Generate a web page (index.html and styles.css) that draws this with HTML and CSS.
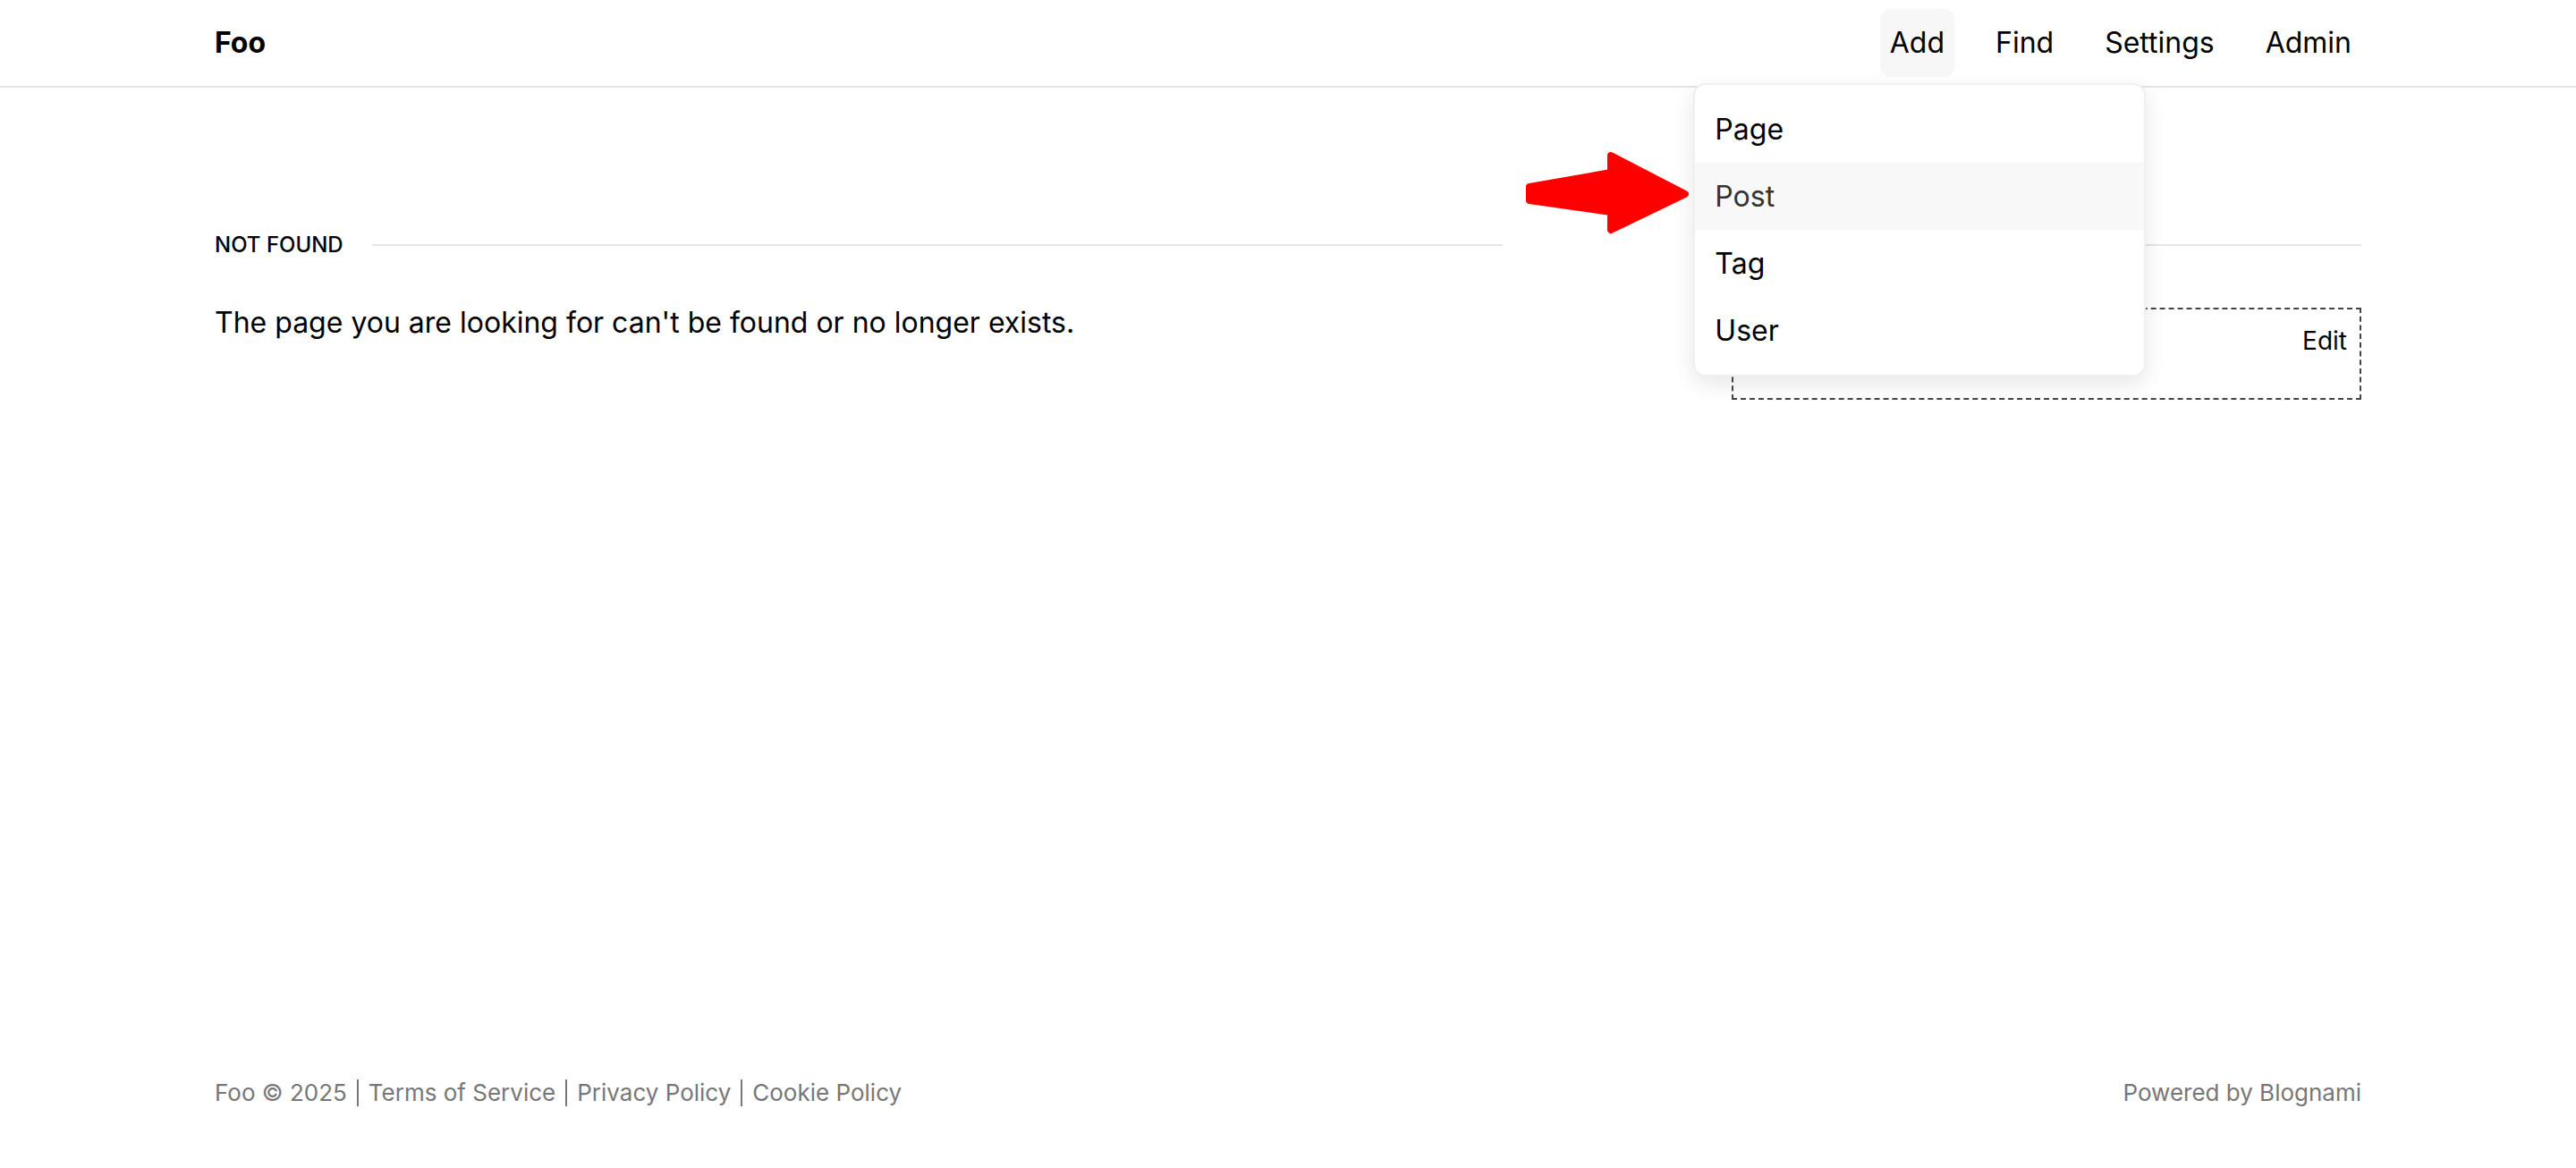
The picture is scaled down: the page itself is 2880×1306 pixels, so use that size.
FILE: index.html
```html
<!DOCTYPE html>
<html lang="en">
<head>
    <meta charset="UTF-8">
    <meta name="viewport" content="width=device-width, initial-scale=1.0">
    <title>Not Found - Foo</title>
    <link rel="stylesheet" href="styles.css">
</head>
<body>
    <header class="header">
        <div class="header-content">
            <a class="logo" href="#">Foo</a>
            <nav class="nav">
                <div class="nav-item open">
                    <a class="nav-link" href="#">Add</a>
                    <!-- Menu aberto -->
                    <div class="dropdown">
                        <svg class="pointer" width="186" height="96" viewBox="0 0 186 96">
                            <path d="M6 41 L97 25 L97 6 L180 49 L97 89 L97 69 L6 56 Z"
                                  fill="#ff0000" stroke="#ff0000" stroke-width="8" stroke-linejoin="round"/>
                        </svg>
                        <a class="dropdown-item" href="#">Page</a>
                        <a class="dropdown-item active" href="#">Post</a>
                        <a class="dropdown-item" href="#">Tag</a>
                        <a class="dropdown-item" href="#">User</a>
                    </div>
                </div>
                <div class="nav-item"><a class="nav-link" href="#">Find</a></div>
                <div class="nav-item"><a class="nav-link" href="#">Settings</a></div>
                <div class="nav-item"><a class="nav-link" href="#">Admin</a></div>
            </nav>
        </div>
    </header>

    <main class="main-container">
        <section class="content">
            <h2 class="section-title"><span>Not Found</span></h2>
            <p class="message">The page you are looking for can't be found or no longer exists.</p>
        </section>

        <aside class="sidebar">
            <div class="section-title"></div>
            <div class="editable">
                <a class="edit-link" href="#">Edit</a>
            </div>
        </aside>
    </main>

    <footer class="footer">
        <div class="footer-content">
            <div class="footer-links">
                <span>Foo &copy; 2025</span>
                <a href="#">Terms of Service</a>
                <a href="#">Privacy Policy</a>
                <a href="#">Cookie Policy</a>
            </div>
            <div>Powered by Blognami</div>
        </div>
    </footer>
</body>
</html>
```

FILE: styles.css
```css
* {
    margin: 0;
    padding: 0;
    box-sizing: border-box;
}

body {
    font-family: Inter, 'Liberation Sans', sans-serif;
    font-size: 32px;
    line-height: 48px;
    color: #000;
    background: #fff;
    min-height: 100vh;
    display: flex;
    flex-direction: column;
}

a {
    color: inherit;
    text-decoration: none;
}

.header {
    border-bottom: 2px solid #e5e5e5;
}

.header-content {
    max-width: 2400px;
    margin: 0 auto;
    height: 96px;
    display: flex;
    align-items: center;
    justify-content: space-between;
}

.logo {
    font-weight: bold;
}

.nav {
    display: flex;
    align-items: center;
    gap: 35px;
}

.nav-item {
    position: relative;
}

.nav-link {
    display: block;
    padding: 14px 11px;
    border-radius: 12px;
}

.nav-item.open .nav-link {
    background: #f7f7f7;
}

/* Menu do botão Add */
.dropdown {
    position: absolute;
    top: calc(100% + 7px);
    left: 50%;
    transform: translateX(-50%);
    margin-left: 3px;
    width: 506px;
    padding: 12px 0;
    background: #fff;
    border: 2px solid #f0f0f0;
    border-radius: 14px;
    box-shadow: 0 8px 24px rgba(0, 0, 0, 0.1);
    z-index: 10;
}

.dropdown-item {
    display: block;
    padding: 14px 22px 13px;
    line-height: 48px;
}

.dropdown-item.active {
    background: #f8f8f8;
    color: #333;
}

.pointer {
    position: absolute;
    left: -191px;
    top: 73px;
}

.main-container {
    flex: 1;
    width: 100%;
    max-width: 2400px;
    margin: 0 auto;
    padding-top: 158px;
    display: grid;
    grid-template-columns: 1fr 704px;
    gap: 256px;
    align-items: start;
}

.section-title {
    display: flex;
    align-items: center;
    gap: 32px;
    height: 36px;
    font-size: 24px;
    line-height: 36px;
    font-weight: 500;
    text-transform: uppercase;
}

.section-title::after {
    content: '';
    flex: 1;
    height: 2px;
    background: #e5e5e5;
}

.message {
    margin-top: 45px;
}

.editable {
    margin-top: 52px;
    height: 103px;
    border: 2px dashed #444;
    padding: 14px 14px;
    display: flex;
    justify-content: flex-end;
    align-items: flex-start;
}

.edit-link {
    font-size: 28px;
    line-height: 42px;
}

.footer {
    padding: 64px 0 63px;
    color: #777;
    font-size: 26px;
    line-height: 42px;
}

.footer-content {
    max-width: 2400px;
    margin: 0 auto;
    display: flex;
    justify-content: space-between;
}

.footer-links {
    display: flex;
    align-items: center;
}

.footer-links a {
    margin-left: 11px;
    padding-left: 11px;
    border-left: 2px solid #777;
    line-height: 30px;
}
```
